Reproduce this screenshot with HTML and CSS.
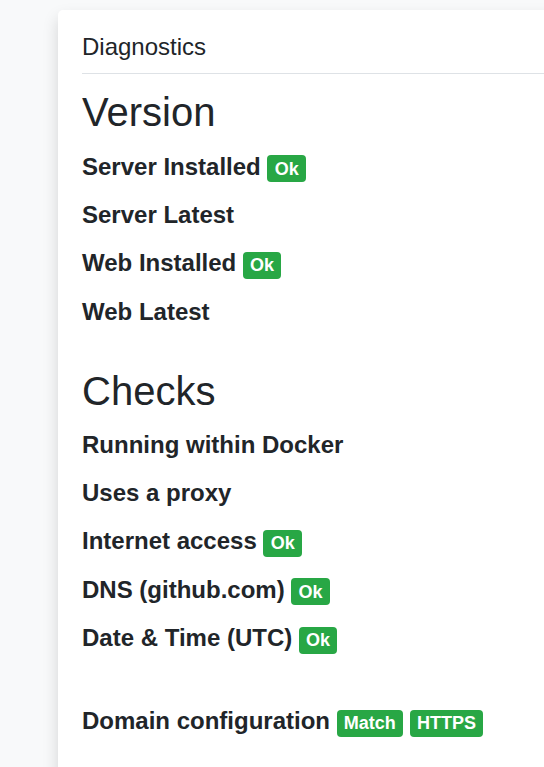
FILE: index.html
```html
<!DOCTYPE html>
<html lang="en">
<head>
<meta charset="utf-8">
<title>Diagnostics</title>
<link rel="stylesheet" href="styles.css">
</head>
<body>
<div class="page">
  <div class="card">
    <div class="card-body">
      <div class="card-title">Diagnostics</div>
      <section class="section">
        <h1 class="section-title">Version</h1>
        <h4 class="row">Server Installed <span class="badge">Ok</span></h4>
        <h4 class="row">Server Latest</h4>
        <h4 class="row">Web Installed <span class="badge">Ok</span></h4>
        <h4 class="row">Web Latest</h4>
      </section>
      <section class="section">
        <h1 class="section-title">Checks</h1>
        <h4 class="row">Running within Docker</h4>
        <h4 class="row">Uses a proxy</h4>
        <h4 class="row">Internet access <span class="badge">Ok</span></h4>
        <h4 class="row">DNS (github.com) <span class="badge">Ok</span></h4>
        <h4 class="row">Date &amp; Time (UTC) <span class="badge">Ok</span></h4>
      </section>
      <div class="domain">
        <h4 class="row">Domain configuration <span class="badge">Match</span> <span class="badge">HTTPS</span></h4>
      </div>
    </div>
  </div>
</div>
</body>
</html>
```

FILE: styles.css
```css
html, body {
  margin: 0;
  padding: 0;
  overflow: hidden;
  background: #f8f9fa;
}

body {
  font-family: "Liberation Sans", Arial, sans-serif;
  color: #212529;
}

.page {
  padding: 10px 0 0 58px;
  margin-right: -40px;
}

.card {
  background: #fff;
  border-radius: 5px;
  box-shadow: 0 0.5rem 1rem rgba(0, 0, 0, 0.15);
  min-height: 900px;
}

.card-body {
  display: flex;
  flex-direction: column;
  padding: 23px 24px 24px 24px;
}

.section {
  display: flex;
  flex-direction: column;
}

.card-title {
  font-size: 24px;
  line-height: 1.2;
  padding-bottom: 11px;
  border-bottom: 1px solid #dee2e6;
}

.section-title {
  font-size: 40px;
  font-weight: 400;
  line-height: 1.2;
  margin: 14px 0 17px 0;
}

.section + .section .section-title {
  margin-top: 21px;
  margin-bottom: 16px;
}

.row {
  font-size: 24px;
  font-weight: 700;
  line-height: 1.2;
  margin: 0 0 19.2px 0;
}

.domain {
  padding-top: 34px;
}

.badge {
  display: inline-block;
  font-size: 75%;
  font-weight: 700;
  line-height: 1;
  padding: 0.25em 0.4em;
  border-radius: 0.25rem;
  background: #28a745;
  color: #fff;
  vertical-align: baseline;
  white-space: nowrap;
}
```
